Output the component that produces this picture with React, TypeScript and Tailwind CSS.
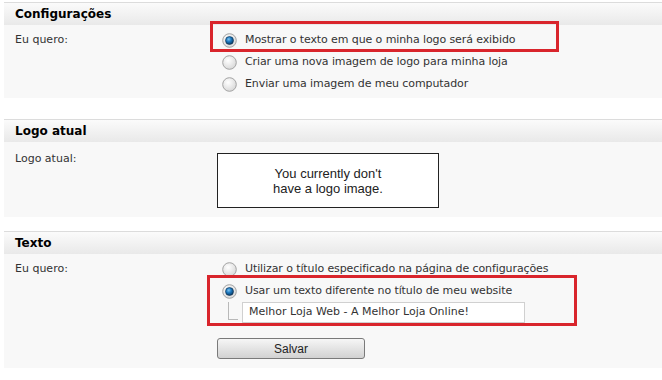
import React from 'react';

const font = { fontFamily: '"DejaVu Sans", Verdana, sans-serif' };

function Radio({ checked }: { checked?: boolean }) {
  return (
    <svg width="15" height="15" viewBox="0 0 15 15" className="shrink-0">
      <defs>
        <radialGradient id="rg-off" cx="40%" cy="35%" r="70%">
          <stop offset="0%" stopColor="#ffffff" />
          <stop offset="100%" stopColor="#d6d6d6" />
        </radialGradient>
        <radialGradient id="rg-on" cx="40%" cy="35%" r="70%">
          <stop offset="0%" stopColor="#7fc4f0" />
          <stop offset="45%" stopColor="#1b78bf" />
          <stop offset="100%" stopColor="#0a3358" />
        </radialGradient>
      </defs>
      <circle cx="7.5" cy="7.5" r="6.8" fill="url(#rg-off)" stroke="#a3a3a3" strokeWidth="1" />
      {checked && <circle cx="7.5" cy="7.5" r="4" fill="url(#rg-on)" stroke="#0d2f4f" strokeWidth="0.6" />}
    </svg>
  );
}

function Option({ label, checked }: { label: string; checked?: boolean }) {
  return (
    <div className="flex items-center gap-[8px] h-[22px] pl-[5px]">
      <Radio checked={checked} />
      <span className="text-[11px] tracking-[-0.1px] text-[#333] whitespace-nowrap">{label}</span>
    </div>
  );
}

function Section({ title, children }: { title: string; children: React.ReactNode }) {
  return (
    <div className="ml-[4px] border-t border-[#dcdcdc]">
      <div className="h-[22px] flex items-center pl-[11px] bg-gradient-to-b from-[#fbfbfb] to-[#e9e9e9]">
        <span className="text-[12px] font-bold text-black">{title}</span>
      </div>
      <div className="bg-[#f8f8f8]">{children}</div>
    </div>
  );
}

export default function App() {
  return (
    <div className="w-[662px] h-[380px] bg-white pt-[2px] relative overflow-hidden" style={font}>
      <Section title="Configurações">
        <div className="grid grid-cols-[213px_1fr] pt-[4px] pb-[3px]">
          <div className="pl-[11px] pt-[3px] text-[11px] text-[#333]">Eu quero:</div>
          <div>
            <Option checked label="Mostrar o texto em que o minha logo será exibido" />
            <Option label="Criar uma nova imagem de logo para minha loja" />
            <Option label="Enviar uma imagem de meu computador" />
          </div>
        </div>
      </Section>

      <div className="h-[21px]" />

      <Section title="Logo atual">
        <div className="grid grid-cols-[213px_1fr] pt-[11px] pb-[9px]">
          <div className="pl-[11px] -mt-[2px] text-[11px] text-[#333]">Logo atual:</div>
          <div>
            <div
              className="w-[222px] h-[55px] bg-white border-[1.5px] border-[#222] flex flex-col items-center justify-center text-[13px] leading-[15px] text-[#222]"
              style={{ fontFamily: '"Liberation Sans", Arial, sans-serif' }}
            >
              <span>You currently don't</span>
              <span>have a logo image.</span>
            </div>
          </div>
        </div>
      </Section>

      <div className="h-[14px]" />

      <Section title="Texto">
        <div className="grid grid-cols-[213px_1fr] pt-[4px] pb-[9px]">
          <div className="pl-[11px] pt-[3px] text-[11px] text-[#333]">Eu quero:</div>
          <div>
            <Option label="Utilizar o título especificado na página de configurações" />
            <Option checked label="Usar um texto diferente no título de meu website" />
            <div className="flex items-start pl-[11px] h-[22px]">
              <div className="w-[10px] h-[18px] border-l border-b border-[#b9b9b9] mr-[4px]" />
              <div className="w-[283px] h-[21px] bg-white border border-[#d0d0d0] flex items-center pl-[6px] text-[11px] text-[#333]">
                Melhor Loja Web - A Melhor Loja Online!
              </div>
            </div>
            <button
              className="block mt-[14px] w-[148px] h-[21px] rounded-[3px] border border-[#7a7a7a] bg-gradient-to-b from-[#f6f6f6] to-[#d2d2d2] text-[12px] text-[#222]"
              style={{ fontFamily: '"Liberation Sans", Arial, sans-serif' }}
            >
              Salvar
            </button>
          </div>
        </div>
      </Section>

      {/* red annotation boxes */}
      <div className="absolute left-[210px] top-[21px] w-[349px] h-[31px] border-[3px] border-[#d9252c] pointer-events-none" />
      <div className="absolute left-[207px] top-[275px] w-[370px] h-[51px] border-[3px] border-[#d9252c] pointer-events-none" />
    </div>
  );
}
